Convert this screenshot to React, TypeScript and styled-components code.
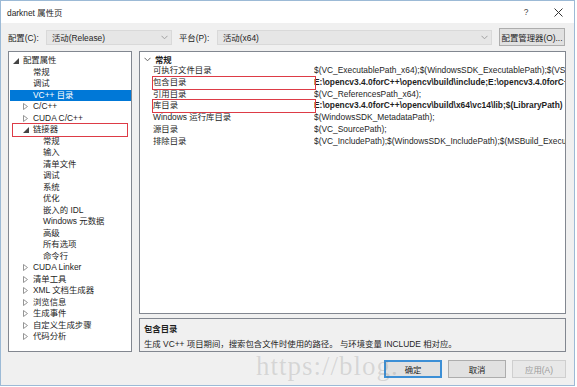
import React from "react";
import styled, { createGlobalStyle } from "styled-components";

const GlobalStyle = createGlobalStyle`
	html, body {
		margin: 0;
		padding: 0;
		background: #ffffff;
	}
	body {
		font-family: "Liberation Sans", "Noto Sans CJK SC", sans-serif;
		font-size: 8.4px;
		color: #1e1e1e;
	}
`;

const Window = styled.div`
	position: relative;
	width: 573px;
	height: 384px;
	border: 1px solid #9cbad6;
	background: #f0f0f0;
	display: flex;
	flex-direction: column;
	overflow: hidden;
`;

const TitleBar = styled.div`
	height: 22px;
	background: #ffffff;
	display: flex;
	align-items: center;
	padding: 0 0 0 6px;
	.title {
		flex: 1 1 auto;
	}
	.ctl {
		width: 32px;
		display: flex;
		justify-content: center;
		align-items: center;
		color: #444;
	}
`;

const Toolbar = styled.div`
	height: 28px;
	display: flex;
	align-items: center;
	padding: 0 0 0 7px;
	white-space: nowrap;
	.label {
		width: 33px;
		margin-right: 5px;
	}
`;

const Combo = styled.div<{ $w: number }>`
	flex: 0 0 ${(p) => p.$w}px;
	height: 15px;
	box-sizing: border-box;
	border: 1px solid #d9d9d9;
	background: #e6e6e6;
	display: flex;
	align-items: center;
	padding: 0 3px 0 5px;
	margin-right: 7px;
	.v {
		flex: 1 1 auto;
	}
`;

const Button = styled.div<{ $w: number; $disabled?: boolean; $default?: boolean }>`
	flex: 0 0 ${(p) => p.$w}px;
	height: 18px;
	box-sizing: border-box;
	border: 1px solid ${(p) => (p.$default ? "#3c8fd6" : p.$disabled ? "#cfcfcf" : "#adadad")};
	box-shadow: ${(p) => (p.$default ? "inset 0 0 0 1px #3c8fd6" : "none")};
	background: ${(p) => (p.$disabled ? "#e8e8e8" : "#e1e1e1")};
	color: ${(p) => (p.$disabled ? "#9a9a9a" : "#1e1e1e")};
	display: flex;
	align-items: center;
	justify-content: center;
	white-space: nowrap;
`;

const Main = styled.div`
	display: flex;
	height: 301px;
	padding: 0 8px 0 7px;
	gap: 7px;
`;

const Tree = styled.div`
	flex: 0 0 124px;
	box-sizing: border-box;
	border: 1px solid #828790;
	background: #ffffff;
	padding: 3px 0 0 1px;
	display: flex;
	flex-direction: column;
`;

const TreeRow = styled.div<{ $level: number; $selected?: boolean; $marked?: boolean }>`
	position: relative;
	height: 11.5px;
	line-height: 11.5px;
	display: flex;
	align-items: center;
	padding-left: ${(p) => 3 + p.$level * 10}px;
	background: ${(p) => (p.$selected ? "#0078d7" : "transparent")};
	color: ${(p) => (p.$selected ? "#ffffff" : "#1e1e1e")};
	white-space: nowrap;
	.arrow {
		display: flex;
		align-items: center;
		flex: 0 0 10px;
	}
	${(p) =>
		p.$marked &&
		`&::after {
			content: "";
			position: absolute;
			left: 2px;
			right: 3px;
			top: -1px;
			bottom: -1px;
			border: 1.5px solid #dd3b46;
		}`}
`;

const Right = styled.div`
	flex: 1 1 auto;
	display: flex;
	flex-direction: column;
	gap: 4px;
	min-width: 0;
`;

const Grid = styled.div`
	flex: 1 1 auto;
	border: 1px solid #828790;
	background: #ffffff;
	padding-top: 1px;
	overflow: hidden;
`;

const GridHeader = styled.div`
	height: 12px;
	display: flex;
	align-items: center;
	padding-left: 4px;
	font-weight: bold;
	gap: 4px;
`;

const GridRow = styled.div<{ $marked?: boolean; $bold?: boolean }>`
	position: relative;
	height: 11.8px;
	line-height: 11.8px;
	display: grid;
	grid-template-columns: 174px minmax(0, 1fr);
	white-space: nowrap;
	.name {
		padding-left: 13px;
	}
	.value {
		overflow: hidden;
		font-weight: ${(p) => (p.$bold ? "bold" : "normal")};
	}
	${(p) =>
		p.$marked &&
		`&::after {
			content: "";
			position: absolute;
			left: 12px;
			width: 162px;
			top: -1px;
			bottom: -1px;
			border: 1.5px solid #dd3b46;
		}`}
`;

const Desc = styled.div`
	height: 34px;
	box-sizing: border-box;
	border: 1px solid #828790;
	background: #f0f0f0;
	padding: 3px 4px;
	display: flex;
	flex-direction: column;
	gap: 3px;
	white-space: nowrap;
	overflow: hidden;
	.h {
		font-weight: bold;
	}
`;

const Footer = styled.div`
	flex: 1 1 auto;
	display: flex;
	align-items: center;
	justify-content: flex-end;
	padding: 0 8px 0 0;
	gap: 6px;
`;

const Watermark = styled.div`
	position: absolute;
	left: 255px;
	top: 350px;
	font-family: "Liberation Serif", serif;
	font-size: 27px;
	letter-spacing: 1px;
	color: rgba(120, 120, 120, 0.22);
	pointer-events: none;
	white-space: nowrap;
`;

const Expanded = () => (
	<svg width="6" height="6" viewBox="0 0 6 6">
		<path d="M6 0 L6 6 L0 6 Z" fill="#444" />
	</svg>
);

const Collapsed = () => (
	<svg width="5" height="7" viewBox="0 0 5 7">
		<path d="M0.5 0.5 L4.5 3.5 L0.5 6.5 Z" fill="none" stroke="#8a8a8a" strokeWidth="0.9" />
	</svg>
);

const Chevron = ({ c = "#666" }: { c?: string }) => (
	<svg width="7" height="5" viewBox="0 0 7 5">
		<path d="M0.5 0.8 L3.5 3.8 L6.5 0.8" fill="none" stroke={c} strokeWidth="1" />
	</svg>
);

type Node = { label: string; level: number; arrow?: "open" | "closed"; selected?: boolean; marked?: boolean };

const nodes: Node[] = [
	{ label: "配置属性", level: 0, arrow: "open" },
	{ label: "常规", level: 1 },
	{ label: "调试", level: 1 },
	{ label: "VC++ 目录", level: 1, selected: true },
	{ label: "C/C++", level: 1, arrow: "closed" },
	{ label: "CUDA C/C++", level: 1, arrow: "closed" },
	{ label: "链接器", level: 1, arrow: "open", marked: true },
	{ label: "常规", level: 2 },
	{ label: "输入", level: 2 },
	{ label: "清单文件", level: 2 },
	{ label: "调试", level: 2 },
	{ label: "系统", level: 2 },
	{ label: "优化", level: 2 },
	{ label: "嵌入的 IDL", level: 2 },
	{ label: "Windows 元数据", level: 2 },
	{ label: "高级", level: 2 },
	{ label: "所有选项", level: 2 },
	{ label: "命令行", level: 2 },
	{ label: "CUDA Linker", level: 1, arrow: "closed" },
	{ label: "清单工具", level: 1, arrow: "closed" },
	{ label: "XML 文档生成器", level: 1, arrow: "closed" },
	{ label: "浏览信息", level: 1, arrow: "closed" },
	{ label: "生成事件", level: 1, arrow: "closed" },
	{ label: "自定义生成步骤", level: 1, arrow: "closed" },
	{ label: "代码分析", level: 1, arrow: "closed" },
];

const props = [
	{ name: "可执行文件目录", value: "$(VC_ExecutablePath_x64);$(WindowsSDK_ExecutablePath);$(VS_ExecutablePath);$(MSBuild_ExecutablePath)" },
	{ name: "包含目录", value: "E:\\opencv3.4.0forC++\\opencv\\build\\include;E:\\opencv3.4.0forC++\\opencv\\build\\include\\opencv", bold: true, marked: true },
	{ name: "引用目录", value: "$(VC_ReferencesPath_x64);" },
	{ name: "库目录", value: "E:\\opencv3.4.0forC++\\opencv\\build\\x64\\vc14\\lib;$(LibraryPath)", bold: true, marked: true },
	{ name: "Windows 运行库目录", value: "$(WindowsSDK_MetadataPath);" },
	{ name: "源目录", value: "$(VC_SourcePath);" },
	{ name: "排除目录", value: "$(VC_IncludePath);$(WindowsSDK_IncludePath);$(MSBuild_ExecutablePath);" },
];

const App: React.FC = () => {
	return (
		<>
			<GlobalStyle />
			<Window>
				<TitleBar>
					<span className="title">darknet 属性页</span>
					<span className="ctl">?</span>
					<span className="ctl">
						<svg width="9" height="9" viewBox="0 0 9 9">
							<path d="M0.5 0.5 L8.5 8.5 M8.5 0.5 L0.5 8.5" stroke="#333" strokeWidth="1" />
						</svg>
					</span>
				</TitleBar>
				<Toolbar>
					<span className="label">配置(C):</span>
					<Combo $w={126}>
						<span className="v">活动(Release)</span>
						<Chevron c="#a0a0a0" />
					</Combo>
					<span className="label">平台(P):</span>
					<Combo $w={275}>
						<span className="v">活动(x64)</span>
						<Chevron c="#a0a0a0" />
					</Combo>
					<Button $w={66}>配置管理器(O)...</Button>
				</Toolbar>
				<Main>
					<Tree>
						{nodes.map((n, i) => (
							<TreeRow key={i} $level={n.level} $selected={n.selected} $marked={n.marked}>
								<span className="arrow">
									{n.arrow === "open" && <Expanded />}
									{n.arrow === "closed" && <Collapsed />}
								</span>
								<span>{n.label}</span>
							</TreeRow>
						))}
					</Tree>
					<Right>
						<Grid>
							<GridHeader>
								<Chevron />
								<span>常规</span>
							</GridHeader>
							{props.map((p, i) => (
								<GridRow key={i} $bold={p.bold} $marked={p.marked}>
									<span className="name">{p.name}</span>
									<span className="value">{p.value}</span>
								</GridRow>
							))}
						</Grid>
						<Desc>
							<span className="h">包含目录</span>
							<span>生成 VC++ 项目期间，搜索包含文件时使用的路径。 与环境变量 INCLUDE 相对应。</span>
						</Desc>
					</Right>
				</Main>
				<Footer>
					<Button $w={58} $default>确定</Button>
					<Button $w={58}>取消</Button>
					<Button $w={54} $disabled>应用(A)</Button>
				</Footer>
				<Watermark>https://blog.</Watermark>
			</Window>
		</>
	);
};

export default App;
